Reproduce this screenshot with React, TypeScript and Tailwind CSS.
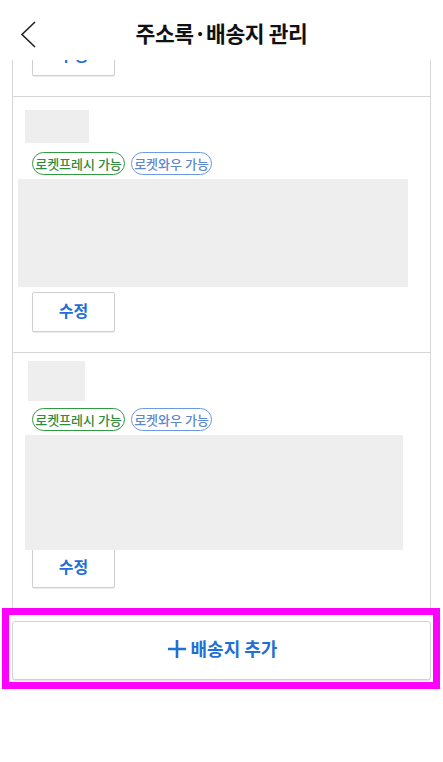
import React from "react";

const FONT = { fontFamily: '"Noto Sans CJK KR", "Noto Sans", sans-serif' };

function Badges() {
  return (
    <div className="flex gap-[6px] ml-[19px]">
      <span className="h-[23px] w-[93px] flex items-center justify-center rounded-full border-[1.6px] border-[#2f9b3f] text-[13px] font-medium text-[#2f8c3c] leading-none pb-[1px]">
        로켓프레시 가능
      </span>
      <span className="h-[23px] w-[81px] flex items-center justify-center rounded-full border-[1.6px] border-[#6d98e3] text-[13px] font-medium text-[#5f87cf] leading-none pb-[1px]">
        로켓와우 가능
      </span>
    </div>
  );
}

function EditButton({ className = "" }: { className?: string }) {
  return (
    <button
      className={
        "h-[40px] w-[83px] ml-[19px] flex items-center justify-center pb-[4px] rounded-[2px] border border-[#cfcfcf] bg-white text-[16px] font-bold text-[#1f6fd6] shadow-[0_1px_1px_rgba(0,0,0,0.08)] " +
        className
      }
    >
      수정
    </button>
  );
}

export default function App() {
  return (
    <div className="w-[443px] h-[762px] bg-white overflow-hidden" style={FONT}>
      {/* header */}
      <div className="relative h-[60px] flex items-center justify-center">
        <svg
          className="absolute left-[18px] top-[20px]"
          width="20"
          height="30"
          viewBox="0 0 20 30"
          fill="none"
        >
          <path d="M17 2 L4 14.5 L17 27" stroke="#222" strokeWidth="1.6" />
        </svg>
        <h1 className="text-[21.5px] font-bold text-[#111] tracking-[-0.4px] mt-[6px]">
          주소록·배송지 관리
        </h1>
      </div>

      {/* list */}
      <div className="ml-[12px] w-[419px] h-[548px] border-x border-[#d6d6d6] overflow-hidden">
        <div className="h-[36px] overflow-hidden">
          <EditButton className="-mt-[24px]" />
        </div>

        <div className="border-t border-[#d6d6d6] h-[256px] pt-[13px]">
          <div className="ml-[12px] w-[64px] h-[33px] bg-[#eeeeee]" />
          <div className="mt-[9px]">
            <Badges />
          </div>
          <div className="mt-[4px] ml-[5px] w-[390px] h-[108px] bg-[#eeeeee]" />
          <EditButton className="mt-[5px]" />
        </div>

        <div className="border-t border-[#d6d6d6] h-[256px] pt-[8px]">
          <div className="ml-[15px] w-[57px] h-[40px] bg-[#eeeeee]" />
          <div className="mt-[7px]">
            <Badges />
          </div>
          <div className="relative z-10 mt-[4px] ml-[12px] w-[378px] h-[115px] bg-[#eeeeee]" />
          <EditButton className="-mt-[2px]" />
        </div>
      </div>

      {/* add button, highlighted */}
      <div className="ml-[2px] w-[438px] h-[81px] border-[7px] border-[#ff00ff] pt-[6px] pl-[3px] pr-[2px]">
        <button className="w-full h-[59px] flex items-center justify-center gap-[3px] pb-[4px] rounded-[3px] border border-[#d2d2d2] bg-white shadow-[0_1px_1px_rgba(0,0,0,0.12)] text-[#1f6fd6]">
          <svg width="22" height="22" viewBox="0 0 22 22" fill="none">
            <path d="M11 2 V20 M2 11 H20" stroke="#1f6fd6" strokeWidth="2.6" />
          </svg>
          <span className="text-[18px] font-bold">배송지 추가</span>
        </button>
      </div>
    </div>
  );
}
